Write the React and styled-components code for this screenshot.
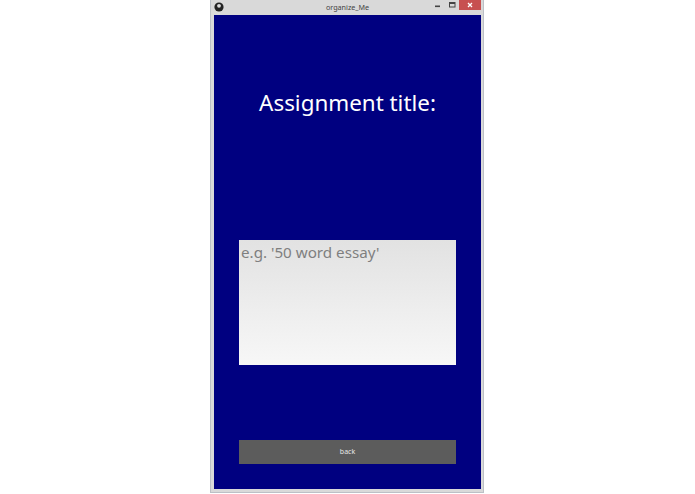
import React from "react";
import styled, { createGlobalStyle } from "styled-components";

const Global = createGlobalStyle`
  html, body { margin: 0; padding: 0; background: #fff; }
  body { font-family: "Noto Sans", "Open Sans", sans-serif; }
`;
const Page = styled.div`
  width: 695px; height: 494px; box-sizing: border-box; padding-right: 1px;
  display: flex; justify-content: center; overflow: hidden;
`;
const Win = styled.div`
  width: 274px; height: 493px; box-sizing: border-box; background: #d9d9d9;
  border: 1px solid #bcc0c6; border-top: 0; padding: 0 2px 3px 3px;
  display: flex; flex-direction: column;
`;
const TitleBar = styled.div`
  height: 15px; flex: none; display: flex; align-items: center; position: relative;
`;
const AppIcon = styled.svg`
  width: 10px; height: 10px; margin-top: -2px;
`;
const Title = styled.div`
  position: absolute; left: 0; right: 0; top: 1px; text-align: center;
  font: 7.2px/12px "Noto Sans", sans-serif; color: #444;
`;
const Controls = styled.div`
  margin-left: auto; display: flex; align-items: flex-start; align-self: flex-start; height: 10px;
`;
const Ctl = styled.div`
  width: ${p => p.$w}px; height: 10px; display: flex; align-items: center; justify-content: center;
`;
const Close = styled(Ctl)`
  background: #c75050; color: #fff;
`;
const Body = styled.div`
  flex: 1; background: #000080; display: flex; flex-direction: column; align-items: center;
`;
const Heading = styled.h1`
  margin: 70px 0 0; height: 36px; font: 400 22.4px/36px "Noto Sans", sans-serif; color: #fff; white-space: nowrap;
`;
const Field = styled.div`
  margin-top: 119px; width: 217px; height: 125px; box-sizing: border-box; padding: 0 2px;
  background: linear-gradient(#e2e2e2, #f7f7f7);
  font: 400 15.2px/25px "Noto Sans", sans-serif; color: #7f7f7f;
`;
const BackButton = styled.button`
  margin-top: 75px; width: 217px; height: 24px; padding: 0; border: 0; background: #5c5c5c;
  color: #e6e6e6; font: 400 7px/24px "Noto Sans", sans-serif;
`;

export default function App() {
  return (
    <Page>
      <Global />
      <Win>
        <TitleBar>
          <AppIcon viewBox="0 0 10 10">
            <circle cx="5" cy="5" r="4.6" fill="#222" />
            <circle cx="5" cy="3.8" r="1.9" fill="#ddd" />
          </AppIcon>
          <Title>organize_Me</Title>
          <Controls>
            <Ctl $w={14}>
              <svg width="6" height="6" viewBox="0 0 6 6"><rect x="0" y="3.5" width="5" height="1.6" fill="#444" /></svg>
            </Ctl>
            <Ctl $w={14}>
              <svg width="7" height="6" viewBox="0 0 7 6"><rect x="0.5" y="0.5" width="5.5" height="4.5" fill="none" stroke="#444" /><rect x="0.5" y="0.5" width="5.5" height="1.5" fill="#444" /></svg>
            </Ctl>
            <Close $w={22}>
              <svg width="6" height="6" viewBox="0 0 6 6"><path d="M1 1L5 5M5 1L1 5" stroke="#fff" strokeWidth="1.3" /></svg>
            </Close>
          </Controls>
        </TitleBar>
        <Body>
          <Heading>Assignment title:</Heading>
          <Field>e.g. '50 word essay'</Field>
          <BackButton>back</BackButton>
        </Body>
      </Win>
    </Page>
  );
}
